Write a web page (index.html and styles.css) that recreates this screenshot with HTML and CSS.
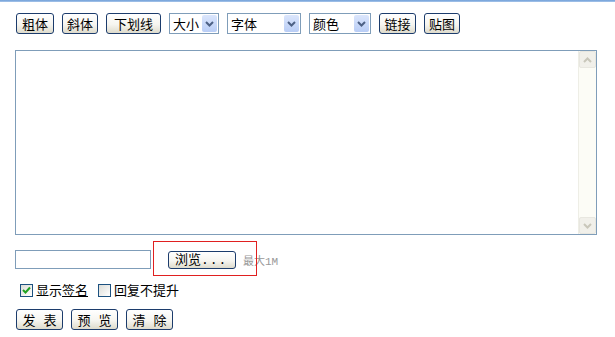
FILE: index.html
```html
<!DOCTYPE html>
<html lang="zh-CN">
<head>
    <meta charset="UTF-8">
    <title>发表回复</title>
    <link rel="stylesheet" href="styles.css">
</head>
<body>
<div class="topline"></div>
<form class="post-form">
    <div class="toolbar">
        <button type="button" class="btn w38">粗体</button>
        <button type="button" class="btn w36">斜体</button>
        <button type="button" class="btn w55">下划线</button>
        <span class="sel w50"><span class="sel-text">大小</span><span class="sel-arrow"><svg width="9" height="6" viewBox="0 0 9 6"><path d="M1 1 L4.5 4.5 L8 1" fill="none" stroke="#4d6185" stroke-width="2"/></svg></span></span>
        <span class="sel w74"><span class="sel-text">字体</span><span class="sel-arrow"><svg width="9" height="6" viewBox="0 0 9 6"><path d="M1 1 L4.5 4.5 L8 1" fill="none" stroke="#4d6185" stroke-width="2"/></svg></span></span>
        <span class="sel w62"><span class="sel-text">颜色</span><span class="sel-arrow"><svg width="9" height="6" viewBox="0 0 9 6"><path d="M1 1 L4.5 4.5 L8 1" fill="none" stroke="#4d6185" stroke-width="2"/></svg></span></span>
        <button type="button" class="btn w37">链接</button>
        <button type="button" class="btn w36">贴图</button>
    </div>

    <div class="editor">
        <div class="editor-body"></div>
        <div class="scrollbar">
            <span class="scroll-btn"><svg width="9" height="6" viewBox="0 0 9 6"><path d="M1 5 L4.5 1.5 L8 5" fill="none" stroke="#c9c7ba" stroke-width="2"/></svg></span>
            <span class="scroll-track"></span>
            <span class="scroll-btn"><svg width="9" height="6" viewBox="0 0 9 6"><path d="M1 1 L4.5 4.5 L8 1" fill="none" stroke="#c9c7ba" stroke-width="2"/></svg></span>
        </div>
    </div>

    <div class="upload">
        <span class="file-box"></span>
        <button type="button" class="btn browse">浏览<span class="dots">...</span></button>
        <span class="limit">最大1M</span>
        <span class="mark"></span>
    </div>

    <div class="options">
        <label class="opt"><span class="check on"><svg width="9" height="8" viewBox="0 0 9 8"><path d="M1 4 L3.5 6.5 L8 1.5" fill="none" stroke="#21a121" stroke-width="2"/></svg></span>显示<u>签名</u></label>
        <label class="opt"><span class="check"></span>回复不提升</label>
    </div>

    <div class="actions">
        <button type="button" class="btn w47 spaced">发 表</button>
        <button type="button" class="btn w47 spaced">预 览</button>
        <button type="button" class="btn w47 spaced">清 除</button>
    </div>
</form>
</body>
</html>
```

FILE: styles.css
```css
body {
    margin: 0;
    background-color: #fff;
    font-family: "Noto Sans CJK SC", "Noto Sans", sans-serif;
    font-size: 13px;
    color: #000;
}

.topline {
    height: 2px;
    background: linear-gradient(#6f9fd8, #a9c6ea);
}

.post-form {
    padding: 11px 0 0 15px;
}

.toolbar {
    display: flex;
    align-items: center;
    height: 21px;
}

.btn {
    box-sizing: border-box;
    height: 21px;
    margin: 0 7px 0 1px;
    padding: 0;
    border: 1px solid #1c3c6c;
    border-radius: 3px;
    background: linear-gradient(#ffffff 0%, #f6f5f0 55%, #dedbcc 100%);
    font-family: "Noto Sans CJK SC", sans-serif;
    font-size: 13px;
    line-height: 17px;
    color: #000;
    cursor: pointer;
}

.spaced {
    word-spacing: 5px;
}

.w36 { width: 36px; }
.w37 { width: 37px; }
.w38 { width: 38px; }
.w47 { width: 47px; }
.w50 { width: 50px; }
.w55 { width: 55px; }
.w62 { width: 62px; }
.w74 { width: 74px; }

.sel {
    box-sizing: border-box;
    display: flex;
    align-items: center;
    height: 21px;
    margin: 0 7px 0 1px;
    padding: 1px;
    border: 1px solid #7f9db9;
    background-color: #fff;
}

.sel-text {
    flex: 1;
    padding-left: 2px;
    line-height: 17px;
}

.sel-arrow {
    display: flex;
    align-items: center;
    justify-content: center;
    width: 15px;
    height: 17px;
    border-radius: 2px;
    background: linear-gradient(#dbe6fc, #b9cdf6);
}

.editor {
    display: flex;
    box-sizing: border-box;
    width: 582px;
    height: 185px;
    margin-top: 16px;
    border: 1px solid #7f9db9;
}

.editor-body {
    flex: 1;
}

.scrollbar {
    display: flex;
    flex-direction: column;
    width: 17px;
    background-color: #fcfcf6;
    border-left: 1px solid #eeeee6;
}

.scroll-btn {
    display: flex;
    align-items: center;
    justify-content: center;
    height: 17px;
    background-color: #f1f0ea;
    border: 1px solid #e8e7e0;
    border-radius: 2px;
    box-sizing: border-box;
}

.scroll-track {
    flex: 1;
}

.upload {
    position: relative;
    display: flex;
    align-items: center;
    height: 19px;
    margin-top: 15px;
}

.file-box {
    box-sizing: border-box;
    width: 136px;
    height: 19px;
    border: 1px solid #7f9db9;
}

.browse {
    width: 68px;
    height: 18px;
    margin: 0 7px 0 17px;
    line-height: 14px;
    text-align: left;
    padding-left: 6px;
}

.dots {
    font-family: "Liberation Mono", monospace;
    letter-spacing: 1px;
}

.limit {
    font-family: "Liberation Mono", "Noto Sans CJK SC", monospace;
    font-size: 11px;
    color: #999;
}

.mark {
    position: absolute;
    left: 138px;
    top: -9px;
    width: 102px;
    height: 33px;
    border: 1px solid #e02020;
}

.options {
    display: flex;
    align-items: center;
    gap: 10px;
    margin-top: 14px;
    padding-left: 5px;
    height: 14px;
}

.opt {
    display: flex;
    align-items: center;
    line-height: 14px;
}

.check {
    box-sizing: border-box;
    display: flex;
    align-items: center;
    justify-content: center;
    width: 13px;
    height: 13px;
    margin-right: 3px;
    border: 1px solid #1c5180;
    background: linear-gradient(135deg, #dcdcd7, #fff);
}

.actions {
    display: flex;
    margin-top: 12px;
}
```
